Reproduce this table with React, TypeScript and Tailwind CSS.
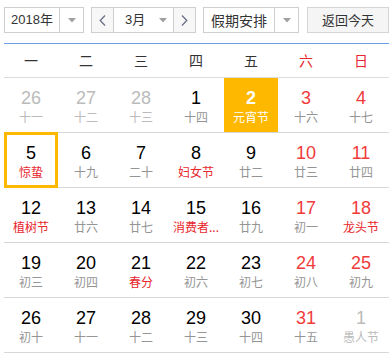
import React from "react";

type Day = { n: number; l: string; numC: string; lunC: string; sel?: boolean; today?: boolean };

const BLK = "text-[#000]";
const RED = "text-[#f03b3b]";
const GRY = "text-[#bbbbbb]";
const LG = "text-[#959595]";
const LR = "text-[#e8262d]";

const rows: Day[][] = [
  [
    { n: 26, l: "十一", numC: GRY, lunC: GRY },
    { n: 27, l: "十二", numC: GRY, lunC: GRY },
    { n: 28, l: "十三", numC: GRY, lunC: GRY },
    { n: 1, l: "十四", numC: BLK, lunC: LG },
    { n: 2, l: "元宵节", numC: "text-white font-bold", lunC: "text-white", sel: true },
    { n: 3, l: "十六", numC: RED, lunC: LG },
    { n: 4, l: "十七", numC: RED, lunC: LG },
  ],
  [
    { n: 5, l: "惊蛰", numC: BLK, lunC: LR, today: true },
    { n: 6, l: "十九", numC: BLK, lunC: LG },
    { n: 7, l: "二十", numC: BLK, lunC: LG },
    { n: 8, l: "妇女节", numC: BLK, lunC: LR },
    { n: 9, l: "廿二", numC: BLK, lunC: LG },
    { n: 10, l: "廿三", numC: RED, lunC: LG },
    { n: 11, l: "廿四", numC: RED, lunC: LG },
  ],
  [
    { n: 12, l: "植树节", numC: BLK, lunC: LR },
    { n: 13, l: "廿六", numC: BLK, lunC: LG },
    { n: 14, l: "廿七", numC: BLK, lunC: LG },
    { n: 15, l: "消费者...", numC: BLK, lunC: LR },
    { n: 16, l: "廿九", numC: BLK, lunC: LG },
    { n: 17, l: "初一", numC: RED, lunC: LG },
    { n: 18, l: "龙头节", numC: RED, lunC: LR },
  ],
  [
    { n: 19, l: "初三", numC: BLK, lunC: LG },
    { n: 20, l: "初四", numC: BLK, lunC: LG },
    { n: 21, l: "春分", numC: BLK, lunC: LR },
    { n: 22, l: "初六", numC: BLK, lunC: LG },
    { n: 23, l: "初七", numC: BLK, lunC: LG },
    { n: 24, l: "初八", numC: RED, lunC: LG },
    { n: 25, l: "初九", numC: RED, lunC: LG },
  ],
  [
    { n: 26, l: "初十", numC: BLK, lunC: LG },
    { n: 27, l: "十一", numC: BLK, lunC: LG },
    { n: 28, l: "十二", numC: BLK, lunC: LG },
    { n: 29, l: "十三", numC: BLK, lunC: LG },
    { n: 30, l: "十四", numC: BLK, lunC: LG },
    { n: 31, l: "十五", numC: RED, lunC: LG },
    { n: 1, l: "愚人节", numC: GRY, lunC: GRY },
  ],
];

const weekdays = ["一", "二", "三", "四", "五", "六", "日"];

function Caret() {
  return (
    <svg width="8" height="5" viewBox="0 0 8 5">
      <path d="M0 0 L8 0 L4 4.5 Z" fill="#a0a0a0" />
    </svg>
  );
}

function Chevron({ dir }: { dir: "l" | "r" }) {
  return (
    <svg width="7" height="11" viewBox="0 0 7 11">
      {dir === "l" ? (
        <path d="M6 0.5 L1.2 5.5 L6 10.5" fill="none" stroke="#6b6f86" strokeWidth="1.3" />
      ) : (
        <path d="M1 0.5 L5.8 5.5 L1 10.5" fill="none" stroke="#6b6f86" strokeWidth="1.3" />
      )}
    </svg>
  );
}

export default function App() {
  return (
    <div
      className="w-[392px] h-[353px] bg-white pl-[4px] overflow-hidden"
      style={{ fontFamily: '"Liberation Sans", Arial, "Noto Sans CJK SC", sans-serif' }}
    >
      <div className="w-[385px]">
        {/* toolbar */}
        <div className="h-[44px] border-b border-[#6a9fe4] flex items-start pt-[7px] text-[13px] text-[#333]">
          <div className="w-[80px] h-[26px] border border-[#cfcfcf] flex bg-white">
            <div className="w-[55px] flex items-center justify-center border-r border-[#cfcfcf]">2018年</div>
            <div className="flex-1 flex items-center justify-center">
              <Caret />
            </div>
          </div>
          <div className="ml-[7px] w-[105px] h-[26px] border border-[#cfcfcf] flex">
            <div className="w-[22px] flex items-center justify-center bg-[#f7f7f7] border-r border-[#cfcfcf]">
              <Chevron dir="l" />
            </div>
            <div className="flex-1 flex items-center bg-white">
              <span className="ml-[11px]">3月</span>
              <span className="ml-[14px] flex">
                <Caret />
              </span>
            </div>
            <div className="w-[22px] flex items-center justify-center bg-[#f7f7f7] border-l border-[#cfcfcf]">
              <Chevron dir="r" />
            </div>
          </div>
          <div className="ml-[7px] w-[96px] h-[26px] border border-[#cfcfcf] flex bg-white">
            <div
              className="w-[71px] flex items-center justify-center border-r border-[#cfcfcf] text-[14px]"
              style={{ fontFamily: '"Noto Sans CJK SC", sans-serif' }}
            >
              假期安排
            </div>
            <div className="flex-1 flex items-center justify-center">
              <Caret />
            </div>
          </div>
          <div
            className="ml-[8px] w-[82px] h-[26px] border border-[#d5d5d5] bg-[#f5f5f5] flex items-center justify-center text-[13px]"
            style={{ fontFamily: '"Noto Sans CJK SC", sans-serif' }}
          >
            返回今天
          </div>
        </div>

        {/* weekdays */}
        <div
          className="h-[34px] border-b border-[#dcdcdc] grid grid-cols-[repeat(7,55px)] text-[14px]"
          style={{ fontFamily: '"Noto Sans CJK SC", sans-serif' }}
        >
          {weekdays.map((w, i) => (
            <div
              key={w}
              className={`w-[54px] flex items-center justify-center ${i >= 5 ? "text-[#e8262d]" : "text-[#333]"}`}
            >
              {w}
            </div>
          ))}
        </div>

        {/* days */}
        {rows.map((row, ri) => (
          <div key={ri} className="h-[55px] border-b border-[#d8d8d8] grid grid-cols-[repeat(7,55px)]">
            {row.map((d, ci) => (
              <div
                key={ci}
                className={`relative w-[54px] h-[54px] flex flex-col items-center pt-[10px] ${d.sel ? "bg-[#ffb800]" : ""}`}
              >
                <div className={`text-[18px] leading-[20px] ${d.numC}`}>{d.n}</div>
                <div
                  className={`mt-[1px] text-[12px] leading-[16px] whitespace-nowrap ${d.lunC}`}
                  style={{ fontFamily: '"Noto Sans CJK SC", sans-serif' }}
                >
                  {d.l}
                </div>
                {d.today && (
                  <div className="absolute left-0 -top-px -bottom-px w-[54px] border-[3px] border-[#ffb800]" />
                )}
              </div>
            ))}
          </div>
        ))}
      </div>
    </div>
  );
}
